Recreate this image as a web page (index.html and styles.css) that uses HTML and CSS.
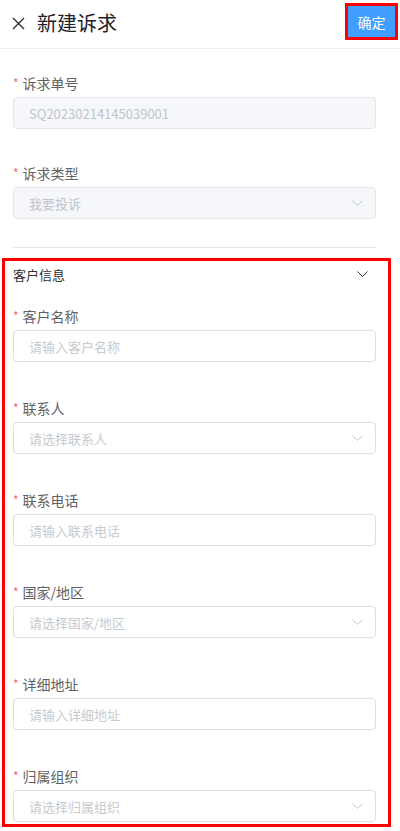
FILE: index.html
```html
<!DOCTYPE html>
<html lang="zh-CN">
<head>
    <meta charset="UTF-8">
    <meta name="viewport" content="width=device-width, initial-scale=1.0">
    <title>新建诉求</title>
    <link rel="stylesheet" href="styles.css">
</head>
<body>
    <header class="topbar">
        <svg class="close-icon" width="13" height="13" viewBox="0 0 13 13">
            <path d="M1 1 L12 12 M12 1 L1 12" stroke="#303133" stroke-width="1.4" fill="none"/>
        </svg>
        <h1 class="title">新建诉求</h1>
        <button class="confirm">确定</button>
    </header>

    <div class="form">
        <div class="form-item top">
            <label class="label"><span class="star">*</span>诉求单号</label>
            <div class="input disabled">SQ20230214145039001</div>
        </div>
        <div class="form-item top">
            <label class="label"><span class="star">*</span>诉求类型</label>
            <div class="input disabled select">我要投诉
                <svg class="arrow" width="11" height="6" viewBox="0 0 11 6"><path d="M0.5 0.5 L5.5 5.5 L10.5 0.5" stroke="#c0c4cc" fill="none"/></svg>
            </div>
        </div>
        <div class="divider"></div>
    </div>

    <section class="panel">
        <div class="panel-head">
            <span>客户信息</span>
            <svg width="11" height="6" viewBox="0 0 11 6"><path d="M0.5 0.5 L5.5 5.5 L10.5 0.5" stroke="#303133" fill="none"/></svg>
        </div>
        <div class="form-item">
            <label class="label"><span class="star">*</span>客户名称</label>
            <div class="input placeholder">请输入客户名称</div>
        </div>
        <div class="form-item">
            <label class="label"><span class="star">*</span>联系人</label>
            <div class="input placeholder select">请选择联系人
                <svg class="arrow" width="11" height="6" viewBox="0 0 11 6"><path d="M0.5 0.5 L5.5 5.5 L10.5 0.5" stroke="#c0c4cc" fill="none"/></svg>
            </div>
        </div>
        <div class="form-item">
            <label class="label"><span class="star">*</span>联系电话</label>
            <div class="input placeholder">请输入联系电话</div>
        </div>
        <div class="form-item">
            <label class="label"><span class="star">*</span>国家/地区</label>
            <div class="input placeholder select">请选择国家/地区
                <svg class="arrow" width="11" height="6" viewBox="0 0 11 6"><path d="M0.5 0.5 L5.5 5.5 L10.5 0.5" stroke="#c0c4cc" fill="none"/></svg>
            </div>
        </div>
        <div class="form-item">
            <label class="label"><span class="star">*</span>详细地址</label>
            <div class="input placeholder">请输入详细地址</div>
        </div>
        <div class="form-item last">
            <label class="label"><span class="star">*</span>归属组织</label>
            <div class="input placeholder select">请选择归属组织
                <svg class="arrow" width="11" height="6" viewBox="0 0 11 6"><path d="M0.5 0.5 L5.5 5.5 L10.5 0.5" stroke="#c0c4cc" fill="none"/></svg>
            </div>
        </div>
    </section>
</body>
</html>
```

FILE: styles.css
```css
body {
    margin: 0;
    font-family: "Noto Sans CJK SC", "Liberation Sans", sans-serif;
    background-color: #fff;
    color: #303133;
}
.topbar {
    display: flex;
    align-items: flex-start;
    height: 48px;
    padding-left: 12px;
    border-bottom: 1px solid #ebeef5;
}
.close-icon {
    margin-top: 17px;
}
.title {
    margin: 0 0 0 12px;
    font-size: 20px;
    font-weight: normal;
    line-height: 46px;
    color: #1f2329;
    flex: 1;
}
.confirm {
    margin: 6px 5px 0 0;
    width: 47px;
    height: 31px;
    padding: 0;
    border: none;
    background-color: #409eff;
    color: #fff;
    font-family: inherit;
    font-size: 14px;
    outline: 3px solid #f00;
}
.form {
    padding: 23px 24px 0 13px;
}
.form-item {
    margin-bottom: 35px;
}
.form-item.top {
    margin-bottom: 33px;
}
.form-item.last {
    margin-bottom: 0;
}
.label {
    display: flex;
    align-items: center;
    height: 22px;
    font-size: 14px;
    color: #606266;
    margin-bottom: 3px;
}
.star {
    color: #f56c6c;
    font-size: 12px;
    line-height: 1;
    margin-right: 4px;
}
.input {
    display: flex;
    align-items: center;
    box-sizing: border-box;
    height: 32px;
    padding: 0 12px 0 15px;
    border: 1px solid #dcdfe6;
    border-radius: 4px;
    font-size: 13px;
}
.input.disabled {
    background-color: #f5f7fa;
    border-color: #e4e7ed;
    color: #c0c4cc;
}
.input.placeholder {
    color: #c8cad0;
}
.select {
    justify-content: space-between;
}
.divider {
    height: 1px;
    background-color: #e4e7ed;
    margin-top: -5px;
}
.panel {
    margin: 10px 9px 0 2px;
    border: 3px solid #f00;
    padding: 0 12px 2px 8px;
}
.panel-head {
    display: flex;
    justify-content: space-between;
    align-items: center;
    height: 26px;
    margin-bottom: 18px;
    font-size: 13px;
    padding-right: 8px;
}
```
